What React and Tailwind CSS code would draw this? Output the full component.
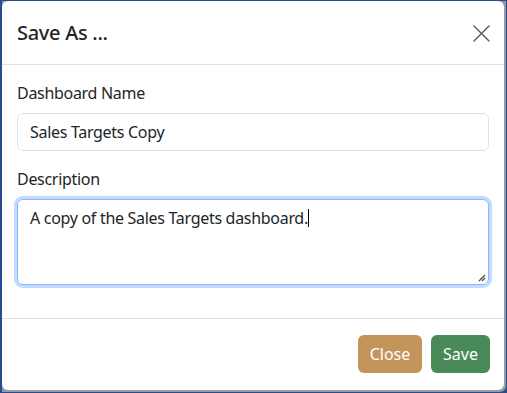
import React from "react";

export default function App() {
  return (
    <div
      className="w-[507px] h-[393px] bg-[#2b4a94] p-[1px] pl-[2px] pt-[1px]"
      style={{ fontFamily: '"Noto Sans", "Open Sans", sans-serif' }}
    >
      <div className="w-full h-full bg-[#9a9a9a] rounded-br-[6px] pr-[2px] pb-[2px] bg-clip-padding">
        <div className="w-full h-full bg-white rounded-[6px] flex flex-col text-[#212529] overflow-hidden tracking-[-0.3px]">
          {/* Header */}
          <div className="flex items-center justify-between h-[64px] pl-[15px] pr-[14px] border-b border-[#dee2e6]">
            <div className="text-[20px] font-medium leading-[30px]">Save As ...</div>
            <svg width="17" height="17" viewBox="0 0 17 17" className="mt-[1px]">
              <path d="M1 1 L16 16 M16 1 L1 16" stroke="#5f6368" strokeWidth="1.5" strokeLinecap="round" />
            </svg>
          </div>
          {/* Body */}
          <div className="px-[15px] pt-[16px] pb-[33px] border-b border-[#dee2e6]">
            <div className="text-[16px] leading-[24px] mb-[8px]">Dashboard Name</div>
            <div className="h-[38px] border border-[#dee2e6] rounded-[6px] px-[12px] flex items-center text-[16px] mb-[16px]">
              Sales Targets Copy
            </div>
            <div className="text-[16px] leading-[24px] mb-[8px]">Description</div>
            <div className="relative h-[86px] border border-[#86b7fe] rounded-[6px] px-[12px] py-[6px] text-[16px] leading-[24px] shadow-[0_0_0_3px_rgba(13,110,253,0.25)]">
              <span>A copy of the Sales Targets dashboard.</span>
              <span className="inline-block w-[1px] h-[18px] bg-black align-[-3px]"></span>
              <svg width="8" height="8" viewBox="0 0 8 8" className="absolute right-[2px] bottom-[2px]">
                <path d="M7 1 L1 7 M7 4 L4 7" stroke="#444" strokeWidth="1.2" />
              </svg>
            </div>
          </div>
          {/* Footer */}
          <div className="flex-1 flex items-start justify-end gap-[9px] pl-[14px] pr-[14px] pt-[16px] tracking-normal">
            <button className="h-[38px] w-[64px] rounded-[6px] bg-[#c4955a] text-white text-[16px]">Close</button>
            <button className="h-[38px] w-[59px] rounded-[6px] bg-[#488a58] text-white text-[16px]">Save</button>
          </div>
        </div>
      </div>
    </div>
  );
}
